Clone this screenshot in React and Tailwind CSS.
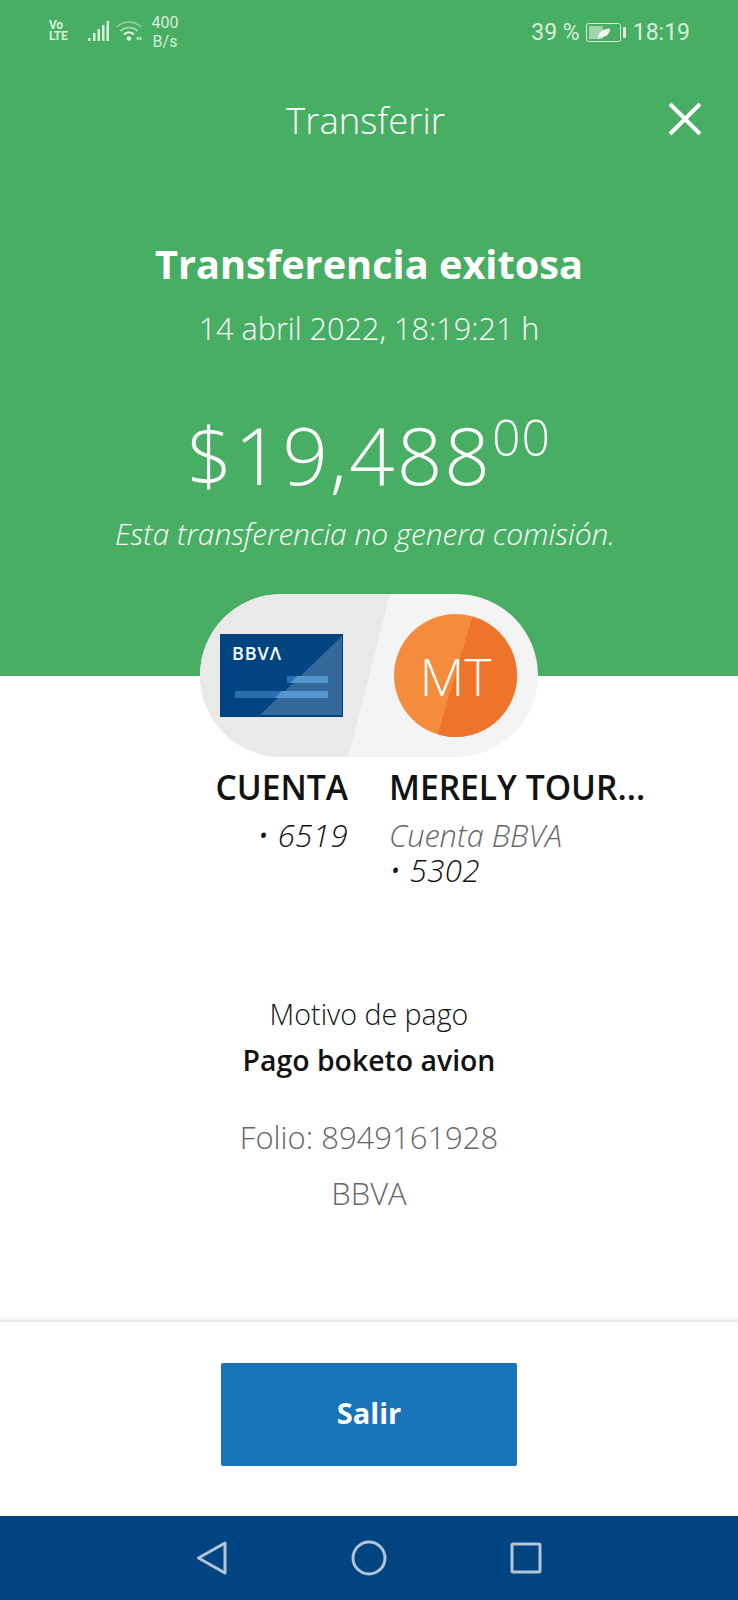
import React from "react";

function StatusBar() {
  return (
    <div className="h-[60px] flex items-start justify-between pl-[49px] pr-[48px] text-[#d8efdc] font-['Roboto',sans-serif]">
      <div className="flex items-start">
        <div className="w-[21px] pt-[20px] text-[12px] leading-[11px] font-bold tracking-[-0.3px]">
          <div>Vo</div>
          <div>LTE</div>
        </div>
        <svg className="ml-[17px] mt-[20px]" width="23" height="22" viewBox="0 0 23 22">
          <g fill="#d8efdc">
            <rect x="1" y="18" width="2.5" height="3" />
            <rect x="6" y="13" width="2.5" height="8" />
            <rect x="10.5" y="9" width="2.5" height="12" />
            <rect x="15" y="5" width="2.5" height="16" />
            <rect x="19.5" y="1" width="2.5" height="20" />
          </g>
        </svg>
        <svg className="ml-[6px] mt-[20px]" width="26" height="23" viewBox="0 0 26 23" fill="none">
          <path d="M1 7C7 0.5 19 0.5 25 7" stroke="#8fcf9f" strokeWidth="1.8" />
          <path d="M4.5 11C9 6.5 17 6.5 21.5 11" stroke="#a4d8b1" strokeWidth="1.8" />
          <path d="M8 14.5C11 11.5 15 11.5 18 14.5" stroke="#e4f4e8" strokeWidth="2.2" />
          <circle cx="13" cy="18.5" r="2.2" fill="#e4f4e8" />
          <path d="M20 18.5l2.5-2v4zM23.5 16.5l2.5 2-2.5 2z" fill="#d8efdc" />
        </svg>
        <div className="ml-[9px] w-[28px] pt-[13px] text-[16px] leading-[19px] text-center">
          <div>400</div>
          <div>B/s</div>
        </div>
      </div>
      <div className="flex items-center pt-[17px] text-[23px] leading-[32px]">
        <span>39 %</span>
        <svg className="ml-[6px]" width="40" height="20" viewBox="0 0 40 20" fill="none">
          <rect x="0.5" y="0.5" width="34" height="18" rx="2" stroke="#d8efdc" />
          <rect x="3" y="3" width="14" height="13" fill="#9fd6ad" />
          <path d="M12 15C12 9 17 6 24 5.5C24 11 20 14.5 14 14.5L12 16.5Z" fill="#eef8f0" />
          <rect x="37" y="4" width="3" height="11" rx="1" fill="#d8efdc" />
        </svg>
        <span className="ml-[7px]">18:19</span>
      </div>
    </div>
  );
}

function BankCard() {
  return (
    <svg width="123" height="83" viewBox="0 0 123 83">
      <rect width="123" height="83" fill="#004481" />
      <path d="M122 2V81H40Z" fill="#33689b" />
      <rect x="67" y="42" width="41" height="7" fill="#2a6fb0" />
      <rect x="15" y="57" width="93" height="7" fill="#2a6fb0" />
      <path d="M70 49L77 42H108V49Z" fill="#5495cd" />
      <path d="M55 64L62 57H108V64Z" fill="#5495cd" />
      <text x="12" y="26" fill="#fff" fontSize="18" fontWeight="600" fontFamily="'Open Sans', sans-serif" letterSpacing="0.9">BBVΛ</text>
    </svg>
  );
}

export default function App() {
  return (
    <div className="font-['Open_Sans',sans-serif] relative w-[738px] h-[1600px] bg-white flex flex-col overflow-hidden">
      <div className="h-[676px] bg-[#48ae64] text-white flex flex-col shrink-0">
        <StatusBar />
        <div className="relative mt-[30px] h-[60px] flex items-center justify-center">
          <span className="text-[36.5px] font-light leading-[60px] ml-[-7px]">Transferir</span>
          <svg className="absolute right-[36px] top-[12px]" width="34" height="34" viewBox="0 0 34 34" stroke="#fff" strokeWidth="4" fill="none">
            <path d="M2 2L32 32M32 2L2 32" />
          </svg>
        </div>
        <div className="mt-[84px] text-center text-[39.7px] leading-[60px] font-bold">Transferencia exitosa</div>
        <div className="mt-[14px] text-center text-[30.6px] leading-[40px] font-light">14 abril 2022, 18:19:21 h</div>
        <div className="mt-[56px] flex justify-center items-start font-light h-[100px]">
          <span className="text-[80px] leading-[100px] tracking-[2px]">$19,488</span>
          <span className="text-[50px] leading-[60px] tracking-[1px] pt-[3px]">00</span>
        </div>
        <div className="mt-[10px] pr-[8px] text-center text-[29.8px] leading-[40px] italic font-light">Esta transferencia no genera comisión.</div>
      </div>

      <div className="-mt-[82px] ml-[200px] w-[338px] h-[163px] rounded-[82px] bg-[#f4f4f4] relative overflow-hidden flex items-center shrink-0">
        <div className="absolute inset-y-0 left-0 w-[190px] bg-[#e9e9e9] [clip-path:polygon(0_0,100%_0,78%_100%,0_100%)]"></div>
        <div className="relative ml-[20px]"><BankCard /></div>
        <div className="relative ml-[51px] w-[123px] h-[123px] rounded-full bg-[#f58b3c] overflow-hidden flex items-center justify-center">
          <div className="absolute inset-y-0 right-0 w-[80px] bg-[#ee742c] [clip-path:polygon(45%_0,100%_0,100%_100%,0_100%)]"></div>
          <span className="relative text-white text-[52px] font-light leading-none">MT</span>
        </div>
      </div>

      <div className="flex mt-[8px] shrink-0">
        <div className="w-[348px] text-right">
          <div className="text-[33.6px] leading-[44px] font-semibold text-[#121212]">CUENTA</div>
          <div className="text-[31px] leading-[35px] italic font-light text-[#121212] mt-[9px] tracking-[0.5px]">• 6519</div>
        </div>
        <div className="ml-[41px]">
          <div className="text-[33.6px] leading-[44px] font-semibold text-[#121212]">MERELY TOUR...</div>
          <div className="text-[30.7px] leading-[35px] italic font-light text-[#666666] mt-[9px]">Cuenta BBVA</div>
          <div className="text-[31px] leading-[35px] italic font-light text-[#121212] tracking-[0.5px]">• 5302</div>
        </div>
      </div>

      <div className="flex flex-col items-center mt-[106px] shrink-0">
        <div className="text-[28.6px] leading-[40px] font-light text-[#121212]">Motivo de pago</div>
        <div className="mt-[6px] text-[28.4px] leading-[40px] font-semibold text-[#121212]">Pago boketo avion</div>
        <div className="mt-[37px] text-[31px] leading-[40px] font-light text-[#666666]">Folio: 8949161928</div>
        <div className="mt-[16px] text-[31px] leading-[40px] font-light text-[#666666]">BBVA</div>
      </div>

      <div className="mt-auto shrink-0 h-[6px] bg-linear-to-b from-white to-[#e8e8e8]"></div>
      <div className="shrink-0 h-[194px] flex justify-center pt-[41px]">
        <div className="w-[296px] h-[103px] pb-[4px] rounded-[2px] bg-[#1973b8] flex items-center justify-center text-white text-[29px] font-bold">Salir</div>
      </div>
      <div className="h-[84px] bg-[#004481] shrink-0">
        <svg width="738" height="84" viewBox="0 0 738 84" fill="none" stroke="#b5c4d6" strokeWidth="3" strokeLinejoin="round">
          <path d="M198.5 42L225 27V57Z" />
          <circle cx="369" cy="42" r="16" />
          <rect x="512" y="28" width="28" height="28" rx="1" />
        </svg>
      </div>
    </div>
  );
}
